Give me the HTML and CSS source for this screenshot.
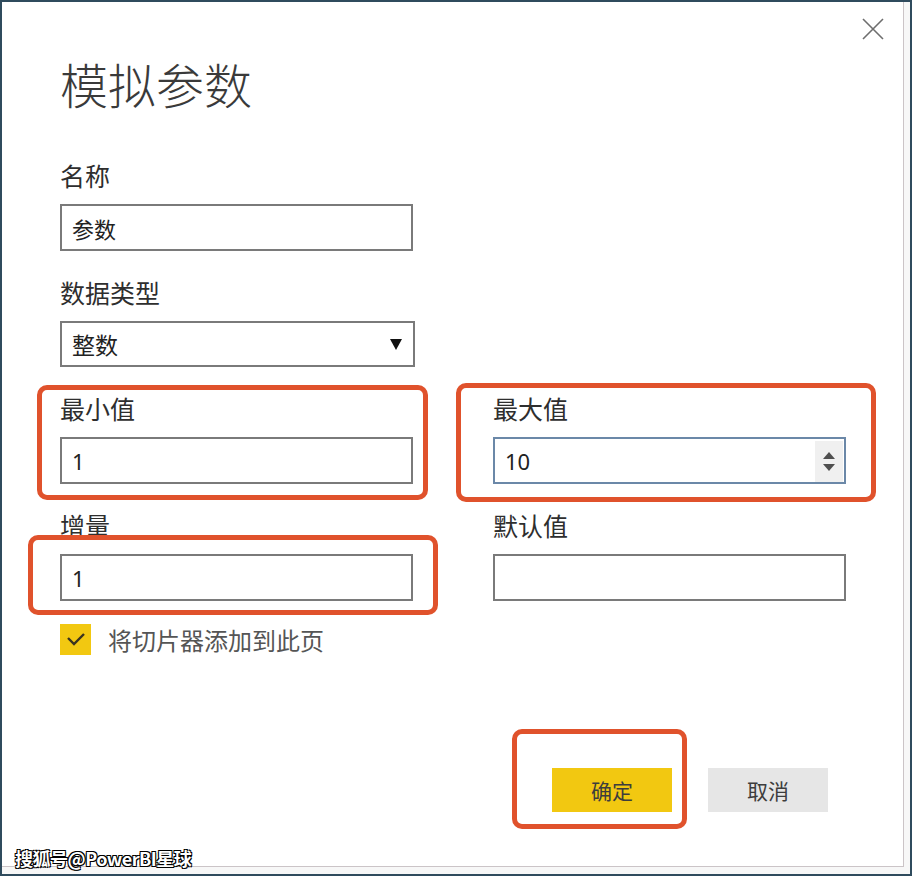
FILE: index.html
```html
<!DOCTYPE html>
<html lang="zh-CN">
<head>
    <meta charset="UTF-8">
    <meta name="viewport" content="width=device-width, initial-scale=1.0">
    <title>模拟参数</title>
    <link rel="stylesheet" href="styles.css">
</head>
<body>
    <div class="frame">
        <div class="dialog">
            <!-- Close button -->
            <button class="close-btn" aria-label="关闭">
                <svg width="22" height="22" viewBox="0 0 22 22">
                    <path d="M1 1 L21 21 M21 1 L1 21" stroke="#6e6e6e" stroke-width="1.6" fill="none"/>
                </svg>
            </button>

            <h1 class="title">模拟参数</h1>

            <div class="field">
                <label class="field-label">名称</label>
                <div class="input-box"><input type="text" value="参数"></div>
            </div>

            <div class="field">
                <label class="field-label">数据类型</label>
                <div class="input-box select-box">
                    <span class="select-value">整数</span>
                    <svg class="select-arrow" width="12" height="12" viewBox="0 0 12 12">
                        <polygon points="0,1 12,1 6,12" fill="#111"/>
                    </svg>
                </div>
            </div>

            <div class="field-grid">
                <div class="field">
                    <label class="field-label">最小值</label>
                    <div class="input-box"><input type="text" value="1"></div>
                </div>
                <div class="field">
                    <label class="field-label">最大值</label>
                    <div class="input-box focused">
                        <input type="text" value="10">
                        <span class="spinner">
                            <svg width="14" height="22" viewBox="0 0 14 22">
                                <polygon points="1,8 13,8 7,1" fill="#4f4f4f"/>
                                <polygon points="1,13 13,13 7,20" fill="#4f4f4f"/>
                            </svg>
                        </span>
                    </div>
                </div>
                <div class="field">
                    <label class="field-label">增量</label>
                    <div class="input-box"><input type="text" value="1"></div>
                </div>
                <div class="field">
                    <label class="field-label">默认值</label>
                    <div class="input-box"><input type="text" value=""></div>
                </div>
            </div>

            <div class="check-row">
                <span class="checkbox">
                    <svg width="31" height="31" viewBox="0 0 31 31">
                        <polyline points="8,14 14,20 24,10" stroke="#3a3320" stroke-width="2.4" fill="none"/>
                    </svg>
                </span>
                <span class="check-label">将切片器添加到此页</span>
            </div>

            <div class="footer">
                <button class="btn btn-primary">确定</button>
                <button class="btn btn-secondary">取消</button>
            </div>

            <!-- Annotation boxes -->
            <div class="mark mark-min"></div>
            <div class="mark mark-max"></div>
            <div class="mark mark-step"></div>
            <div class="mark mark-ok"></div>
        </div>

        <div class="watermark">搜狐号@PowerBI星球</div>
    </div>
</body>
</html>
```

FILE: styles.css
```css
:root {
    --text-color: #2e2e2e;
    --input-border: #7a7a7a;
    --focus-border: #6b88a8;
    --accent: #f2c811;
    --mark-color: #e0522c;
}

* {
    margin: 0;
    padding: 0;
    box-sizing: border-box;
}

body {
    font-family: "Noto Sans CJK SC", "Noto Sans", sans-serif;
    color: var(--text-color);
    background: #fff;
}

.frame {
    position: relative;
    width: 912px;
    height: 876px;
    border: 2px solid #2f4b5d;
    background: #f7f7f7;
}

/* Dialog */
.dialog {
    position: relative;
    display: flex;
    flex-direction: column;
    width: 902px;
    height: 865px;
    padding-left: 58px;
    background: #fff;
    border-right: 1px solid #cbc4c7;
    border-bottom: 1px solid #cbc4c7;
}

.close-btn {
    position: absolute;
    top: 16px;
    left: 860px;
    width: 22px;
    height: 22px;
    border: none;
    background: none;
    line-height: 0;
}

.title {
    margin-top: 53px;
    font-size: 48px;
    line-height: 56px;
    font-weight: 300;
    color: #3a3a3a;
}

/* Fields */
.field {
    margin-top: 25px;
}

.title + .field {
    margin-top: 48px;
}

.field-label {
    display: block;
    font-size: 25px;
    line-height: 32px;
    margin-bottom: 13px;
}

.input-box {
    display: flex;
    align-items: center;
    width: 353px;
    height: 47px;
    border: 2px solid var(--input-border);
    background: #fff;
}

.input-box input {
    flex: 1;
    min-width: 0;
    height: 100%;
    border: none;
    outline: none;
    padding-left: 10px;
    font-family: "Noto Sans", "Noto Sans CJK SC", sans-serif;
    font-size: 22px;
    color: #222;
    background: transparent;
}

.input-box.focused {
    border-color: var(--focus-border);
}

.spinner {
    display: flex;
    align-items: center;
    justify-content: center;
    width: 28px;
    height: 41px;
    margin: 2px 1px 0 0;
    background: #f0f0f0;
}

.select-box {
    width: 355px;
    height: 46px;
    justify-content: space-between;
    padding: 0 11px 0 10px;
}

.select-value {
    font-size: 23px;
    color: #222;
}

.field-grid {
    display: grid;
    grid-template-columns: 353px 353px;
    column-gap: 80px;
}

/* Checkbox */
.check-row {
    display: flex;
    align-items: center;
    margin-top: 21px;
}

.checkbox {
    width: 31px;
    height: 31px;
    background: var(--accent);
    line-height: 0;
}

.check-label {
    margin-left: 17px;
    font-size: 24px;
    color: #555;
}

/* Footer buttons */
.footer {
    display: flex;
    justify-content: flex-end;
    gap: 36px;
    margin-top: auto;
    padding: 0 75px 54px 0;
}

.btn {
    width: 120px;
    height: 44px;
    border: none;
    font-family: "Noto Sans CJK SC", sans-serif;
    font-size: 21px;
    color: #3d3d3d;
}

.btn-primary {
    background: var(--accent);
}

.btn-secondary {
    background: #e6e6e6;
}

/* Red annotation boxes */
.mark {
    position: absolute;
    border: 5px solid var(--mark-color);
    border-radius: 10px;
}

.mark-min {
    left: 35px;
    top: 383px;
    width: 391px;
    height: 115px;
}

.mark-max {
    left: 454px;
    top: 381px;
    width: 420px;
    height: 119px;
}

.mark-step {
    left: 26px;
    top: 533px;
    width: 410px;
    height: 80px;
}

.mark-ok {
    left: 510px;
    top: 727px;
    width: 175px;
    height: 100px;
}

/* Watermark */
.watermark {
    position: absolute;
    left: 13px;
    top: 843px;
    font-size: 18px;
    font-weight: 700;
    letter-spacing: -0.5px;
    color: #fff;
    text-shadow: 1px 1px 0 #000, -1px -1px 0 #000, 1px -1px 0 #000, -1px 1px 0 #000;
}
```
